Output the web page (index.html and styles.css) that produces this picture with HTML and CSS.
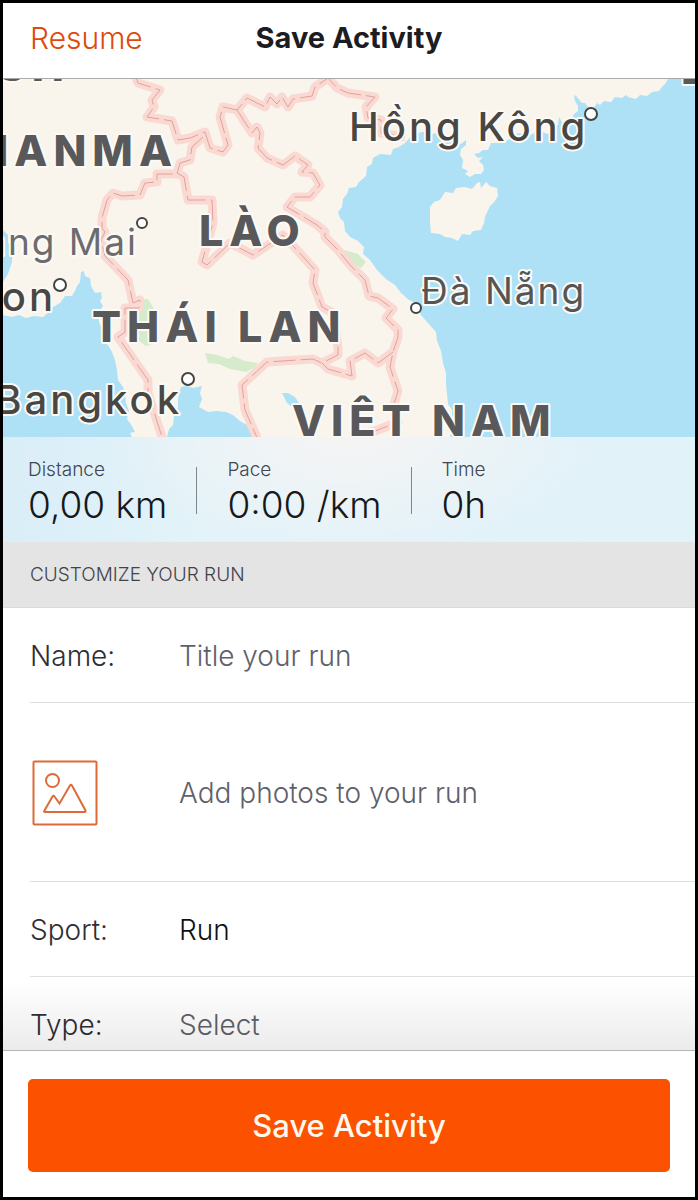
FILE: index.html
```html
<!DOCTYPE html>
<html lang="en">
  <head>
    <meta charset="UTF-8" />
    <meta name="viewport" content="width=device-width, initial-scale=1.0" />
    <title>Save Activity</title>
    <link rel="stylesheet" href="styles.css">
  </head>
  <body>
    <div class="screen">
      <header class="navbar">
        <a class="resume" href="#">Resume</a>
        <h1>Save Activity</h1>
      </header>

      <svg class="map" viewBox="3 79 692 358" role="img" aria-label="Map">
        <rect class="land" x="3" y="79" width="692" height="358" />

        <!-- parks -->
        <path class="park" d="M140 300l8 -1 5 8 2 14 -3 12 3 10 -9 3 -7 -5 -2 -20z" />
        <path class="park" d="M205 353l12 2 12 4 4 -3 12 5 13 2 -4 5 -8 4 -16 -3 -11 -5 -11 -1z" />
        <path class="park" d="M344 250l14 4 8 8 -5 6 -15 -9z" />

        <!-- sea and lake -->
        <path class="water" d="M668 79L665 84 661 88 659 91 652 92 647 96 640 95 636 99 628 97 626 95 622 98 615 97 611 102 604 101 600 105 597 103 594 108 588 107 585 103 582 103 576 96 574 95 575 101 578 106 578 111 574 114 570 122 568 125 562 122 559 117 558 125 551 127 548 134 539 131 530 135 518 133 508 140 500 143 491 143 488 150 483 150 479 153 474 154 478 158 483 157 479 161 483 165 484 170 481 174 475 174 470 177 465 174 468 171 462 168 463 160 460 155 461 149 466 145 466 140 461 144 455 142 450 137 444 140 435 133 430 135 426 131 418 133 411 136 405 143 399 147 393 149 391 155 380 154 373 158 372 164 367 167 366 176 359 182 356 187 349 188 347 194 343 199 342 207 338 212 340 218 344 222 345 231 350 237 358 241 364 247 363 254 370 260 377 270 386 279 395 285 401 293 409 300 416 303 421 315 427 322 436 332 437 341 441 351 443 363 446 373 446 384 447 394 448 404 452 410 452 425 450 437H695V79z" />
        <path class="water" d="M3 230L8 235 8 242 12 250 12 262 8 274 3 282z" />
        <path class="water" d="M3 315L12 317 19 315 26 318 34 316 43 317 49 312 53 307 60 303 65 296 72 296 75 291 77 286 80 282 81 272 84 271 85 276 90 278 91 286 95 293 101 292 102 298 100 301 103 306 99 313 99 322 103 331 101 340 108 345 112 352 115 360 117 370 118 380 123 387 125 393 126 403 129 411 127 419 132 426 135 432 130 433 132 437H3z" />
        <path class="water" d="M167 437L169 429 173 425 174 416 178 407 178 398 181 387 187 386 193 388 202 386 200 393 202 399 199 407 208 412 217 411 226 412 233 415 240 421 247 425 251 431 254 437z" />
        <path class="water" d="M282 393L288 393 295 397 299 403 305 410 300 411 293 408 287 403z" />
        <path class="land" d="M430 207L434 202 440 200 445 192 453 193 456 188 465 187 472 189 477 183 480 182 481 188 486 182 490 186 497 188 498 196 495 201 490 206 485 217 484 223 481 230 473 231 470 235 462 234 458 241 452 238 445 237 440 234 431 233 430 223z" />

        <!-- country borders, drawn once as a halo and once as a dashed line -->
        <defs>
          <g id="borders">
            <path d="M135 75L138 83 160 90 152 100 154 107 147 117 172 121 178 140 190 138 205 132 210 148 223 152 228 145 220 117 223 107 237 110 247 98 265 107 270 97 277 104 282 97 288 107 293 99 312 96 315 87 328 78 337 88 348 93 375 97 366 107 368 118 381 120 381 133 405 137" />
            <path d="M237 110L248 127 252 133 257 127 260 133 258 148 267 158 283 165 295 156 308 165 302 172 313 173 320 185 310 197 295 197 287 207 317 225 325 232 325 237 338 250 350 265 365 280 369 296 378 298 393 309 386 318 398 330 398 337 393 352 390 367 398 391 393 407 398 422 375 431 350 437" />
            <path d="M203 137L192 147 190 160 180 163 177 174 157 174 157 182 145 183 140 195 122 196 113 193 107 200 102 218 102 228 105 232 101 240 105 256 128 280 133 303 140 300 139 308 125 308 125 332 118 337 148 380 148 393 163 440" />
            <path d="M177 173L184 177 188 200 212 200 213 223 202 262 207 265 230 243 253 255 283 235 297 250 315 270 313 283 322 307 333 313 338 348 338 355 322 363 313 359 267 362 242 385 245 410 258 440M322 363L328 369 352 376 350 361 365 353 378 363 393 352" />
          </g>
        </defs>
        <use class="halo" href="#borders" />
        <use class="dash" href="#borders" />

        <g class="country">
          <text x="70" y="81" text-anchor="end">BANGLADESH</text>
          <text x="178" y="166" text-anchor="end">MIANMA</text>
          <text x="199" y="246">LÀO</text>
          <text x="92" y="342">THÁI LAN</text>
          <text x="292" y="436">VIỆT NAM</text>
          <text x="681" y="84">ĐÀI LOAN</text>
        </g>
        <g class="city">
          <text x="349" y="141">Hồng Kông</text>
          <text x="56" y="311" text-anchor="end">Yangon</text>
          <text x="182" y="414" text-anchor="end">Bangkok</text>
        </g>
        <g class="town">
          <text class="faded" x="138" y="255" text-anchor="end">Chiang Mai</text>
          <text x="421" y="304">Đà Nẵng</text>
        </g>
        <g class="pin">
          <circle cx="591" cy="114" r="6" />
          <circle cx="142" cy="223" r="5" />
          <circle cx="60" cy="285" r="6" />
          <circle cx="188" cy="379" r="6" />
          <circle cx="416" cy="308" r="5" />
        </g>
      </svg>

      <dl class="stats">
        <div class="stat">
          <dt>Distance</dt>
          <dd>0,00 km</dd>
        </div>
        <div class="stat">
          <dt>Pace</dt>
          <dd>0:00 /km</dd>
        </div>
        <div class="stat">
          <dt>Time</dt>
          <dd>0h</dd>
        </div>
      </dl>

      <form class="details" id="activity">
        <h2>CUSTOMIZE YOUR RUN</h2>
        <div class="row">
          <label for="name">Name:</label>
          <input type="text" id="name" placeholder="Title your run" />
        </div>
        <button type="button" class="row photos">
          <svg class="photo-icon" viewBox="0 0 66 66" aria-hidden="true">
            <rect x="1.500" y="1.500" width="63" height="63" rx="1" />
            <circle cx="20.500" cy="20.500" r="6.500" />
            <path d="M12.500 50.500L20.500 36.500q1 -1.500 2 0L27.500 43.500L38 25.500q1 -1.500 2 0L53.500 50.500q.5 1.500 -1 1.500H13q-1.500 0 -.5 -1.500z" />
          </svg>
          <span>Add photos to your run</span>
        </button>
        <div class="row">
          <label for="sport">Sport:</label>
          <select id="sport" class="chosen">
            <option>Run</option>
          </select>
        </div>
        <div class="row">
          <label for="type">Type:</label>
          <select id="type">
            <option>Select</option>
          </select>
        </div>
      </form>

      <footer class="actions">
        <button type="submit" form="activity">Save Activity</button>
      </footer>
    </div>
  </body>
</html>
```
FILE: styles.css
```css
* {
  box-sizing: border-box;
}

body {
  margin: 0;
  font-family: Inter, "Liberation Sans", sans-serif;
  color: #242428;
}

.screen {
  display: flex;
  flex-direction: column;
  height: 100vh;
  border: 3px solid #000;
  background-color: #fff;
  overflow: hidden;
}

.navbar {
  display: grid;
  grid-template-columns: 1fr auto 1fr;
  align-items: center;
  flex-shrink: 0;
  height: 76px;
  padding: 0 27px 6px;
  border-bottom: 1px solid #aaa;
}

.navbar h1 {
  margin: 0;
  font-size: 29px;
  font-weight: 700;
  color: #1c1c22;
}

.resume {
  font-size: 30px;
  font-weight: 300;
  color: #dd4a0c;
  text-decoration: none;
}

.map {
  display: block;
  width: 100%;
  flex-shrink: 0;
}

.land {
  fill: #f9f5ed;
}

.water {
  fill: #aee1f6;
}

.park {
  fill: #d5ebcb;
}

.halo,
.dash {
  fill: none;
  stroke-linejoin: round;
}

.halo {
  stroke: #fbd9d3;
  stroke-width: 9px;
}

.dash {
  stroke: #dfa29c;
  stroke-width: 1px;
  stroke-dasharray: 22 5;
}

.map text {
  paint-order: stroke;
  stroke: #fcfaf6;
  stroke-width: 4px;
  stroke-linejoin: round;
}

.country {
  font-size: 43px;
  font-weight: 800;
  letter-spacing: 6px;
  fill: #59595b;
}

.city {
  font-size: 40px;
  font-weight: 500;
  letter-spacing: 3px;
  fill: #494744;
}

.town {
  font-size: 37px;
  letter-spacing: 2px;
  fill: #555;
}

.faded {
  fill: #6c6c6e;
}

.pin {
  fill: #fff;
  stroke: #444;
  stroke-width: 2px;
}

.stats {
  display: flex;
  flex-shrink: 0;
  height: 105px;
  margin: 0;
  padding: 20px 25px 0;
  background: radial-gradient(ellipse 36% 110% at 50% 0, #f6f4f3, rgba(246, 244, 243, 0)),
    linear-gradient(to right, #daeef8, #e3f3f9 30%, #e1f2f9);
}

.stat {
  position: relative;
  padding-right: 60px;
}

/* thin rule between two stats */
.stat:not(:last-child)::after {
  content: "";
  position: absolute;
  top: 10px;
  right: 30px;
  width: 1px;
  height: 47px;
  background-color: #7d878e;
}

.stat dt {
  font-size: 19px;
  line-height: 25px;
  font-weight: 300;
  color: #42464f;
}

.stat dd {
  margin: 0;
  font-size: 37px;
  line-height: 46px;
  font-weight: 300;
  color: #15191d;
}

.details {
  flex: 1;
  min-height: 0;
  overflow: hidden;
}

.details h2 {
  margin: 0;
  padding: 1px 27px 0;
  font-size: 19px;
  line-height: 64px;
  font-weight: 300;
  color: #42424a;
  background-color: #e4e4e4;
  border-bottom: 1px solid #dadada;
}

.row {
  display: grid;
  grid-template-columns: 149px 1fr;
  align-items: center;
  height: 95px;
  margin-left: 27px;
  padding-top: 2px;
  border-bottom: 1px solid #dfdfe1;
  font-size: 28px;
  font-weight: 300;
}

.row label {
  color: #2e2e34;
}

.row input,
.row select {
  width: 100%;
  padding: 0;
  border: none;
  background: none;
  appearance: none;
  font: inherit;
  color: #60606a;
}

.row input::placeholder {
  color: #60606a;
  opacity: 1;
}

.row .chosen {
  color: #111;
}

.photos {
  width: calc(100% - 27px);
  height: 179px;
  padding: 2px 0 0;
  border-width: 0 0 1px;
  background: none;
  font-family: inherit;
  color: #60606a;
  text-align: left;
  cursor: pointer;
}

.photo-icon {
  width: 66px;
  margin-left: 2px;
  fill: none;
  stroke: #dc6b37;
  stroke-width: 2px;
}

.actions {
  position: relative;
  flex-shrink: 0;
  padding: 28px 25px 25px;
  border-top: 1px solid #c4c4c4;
  background-color: #fff;
}

.actions::before {
  content: "";
  position: absolute;
  left: 0;
  right: 0;
  bottom: 100%;
  height: 70px;
  background: linear-gradient(to top, rgba(0, 0, 0, 0.08), rgba(0, 0, 0, 0));
  pointer-events: none;
}

.actions button {
  display: block;
  width: 100%;
  height: 93px;
  border: none;
  border-radius: 5px;
  background-color: #fc5200;
  color: #fff8ee;
  font-family: inherit;
  font-size: 31px;
  font-weight: 500;
  cursor: pointer;
}
```
